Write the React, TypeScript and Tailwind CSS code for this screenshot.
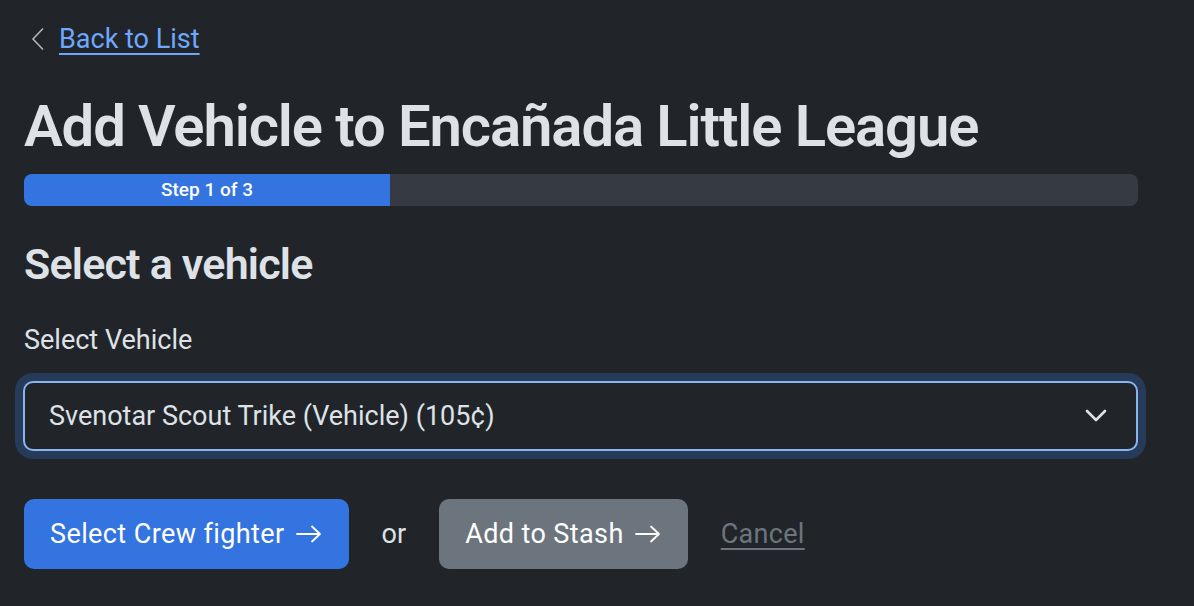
import React, { useState } from "react";

function Arrow() {
  return (
    <svg width="26" height="18" viewBox="0 0 26 18" className="ml-[11px] inline-block">
      <path d="M1 9 H24 M16 1.5 L24 9 L16 16.5" fill="none" stroke="currentColor" strokeWidth="1.8" strokeLinecap="round" strokeLinejoin="round" />
    </svg>
  );
}

export default function App() {
  const [vehicle, setVehicle] = useState("svenotar");

  return (
    <div
      className="min-h-screen bg-[#212529] text-[#dee2e6] px-6 pt-[24px]"
      style={{ fontFamily: "Roboto, 'Noto Sans', sans-serif" }}
    >
      {/* back link */}
      <div className="flex items-center gap-[14px] h-[30px]">
        <svg width="14" height="24" viewBox="0 0 14 24" className="ml-[7px]">
          <path d="M12 1.5 L2 12 L12 22.5" fill="none" stroke="#adb5bd" strokeWidth="1.6" />
        </svg>
        <a href="#" className="text-[27px] leading-none text-[#6ea8fe] underline underline-offset-[5px] decoration-[2px]">
          Back to List
        </a>
      </div>

      <h1 className="mt-[40px] text-[58px] leading-[64px] font-semibold tracking-[-1.1px]">
        Add Vehicle to Encañada Little League
      </h1>

      {/* progress */}
      <div className="mt-[16px] w-[1114px] h-[32px] rounded-[8px] bg-[#363a43] overflow-hidden flex">
        <div className="w-[366px] bg-[#3474e0] flex items-center justify-center text-white text-[19px] font-medium">
          Step 1 of 3
        </div>
      </div>

      <h2 className="mt-[32px] text-[43px] leading-[52px] font-semibold tracking-[-0.8px]">Select a vehicle</h2>

      <label className="block mt-[34px] text-[27px] leading-[32px]">Select Vehicle</label>

      <div className="mt-[17px] w-[1131px] -ml-[9px] p-[8px] rounded-[18px] bg-[#263a5a]">
        <div className="relative h-[70px] rounded-[10px] border-2 border-[#8cb4f0] bg-[#212529] flex items-center">
          <select
            value={vehicle}
            onChange={(e) => setVehicle(e.target.value)}
            className="appearance-none w-full h-full bg-transparent pl-[24px] text-[27px] text-[#dee2e6] outline-none"
          >
            <option value="svenotar">Svenotar Scout Trike (Vehicle) (105¢)</option>
          </select>
          <svg width="22" height="14" viewBox="0 0 22 14" className="absolute right-[29px] top-[26px] pointer-events-none">
            <path d="M2 2 L11 11 L20 2" fill="none" stroke="#dee2e6" strokeWidth="2.6" strokeLinecap="round" strokeLinejoin="round" />
          </svg>
        </div>
      </div>

      {/* actions */}
      <div className="mt-[40px] flex items-center">
        <button className="h-[70px] pl-[26px] pr-[27px] rounded-[10px] bg-[#3474e0] text-white text-[27px] tracking-[0.4px] flex items-center">
          Select Crew fighter
          <Arrow />
        </button>
        <span className="ml-[33px] mr-[33px] text-[27px]">or</span>
        <button className="h-[70px] pl-[26px] pr-[27px] rounded-[10px] bg-[#6c757d] text-white text-[27px] tracking-[0.4px] flex items-center">
          Add to Stash
          <Arrow />
        </button>
        <a href="#" className="ml-[33px] text-[27px] text-[#6c757d] tracking-[0.3px] underline underline-offset-[5px]">
          Cancel
        </a>
      </div>
    </div>
  );
}
